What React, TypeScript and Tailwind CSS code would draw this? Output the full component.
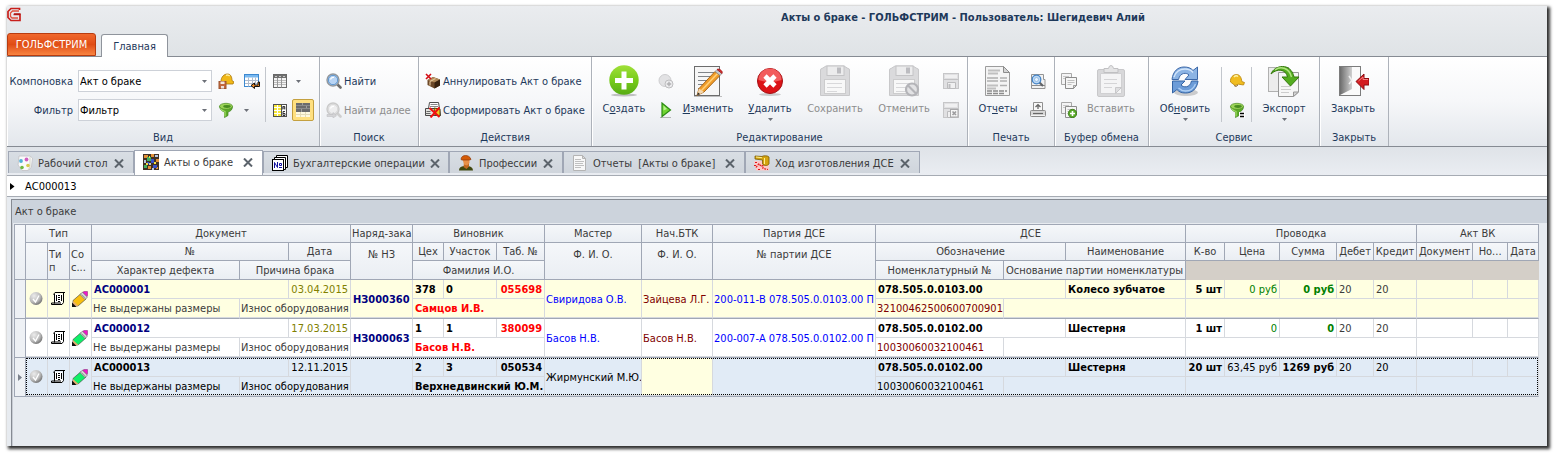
import React from "react";

type Kids = { children?: React.ReactNode };

/* ---------- small icons, 16x16 ---------- */

const S = ({ children, size = 16, cls = "" }: Kids & { size?: number; cls?: string }) => (
  <svg width={size} height={size} viewBox={`0 0 ${size} ${size}`} className={`shrink-0 ${cls}`} aria-hidden="true">
    {children}
  </svg>
);

const Logo = () => (
  <S>
    <path d="M12.500 4V2.500H4L1 5.500v6L4 14.500h9V8.500H6.500" fill="none" stroke="#c8201c" strokeWidth="1.700" />
    <path d="M12 5H5.500L3.500 7v3.500l1.500 1.500h6" fill="none" stroke="#e0503c" strokeWidth="1.300" />
    <path d="M7 8h6.500" fill="none" stroke="#a81410" strokeWidth="1.400" />
  </S>
);

const HelmetSave = () => (
  <S>
    <path d="M3 8.500C3 4 6 1 9.500 1 13 1 14 4.500 14 7.500l2 1.500-1 2H8L3 9.500z" fill="#f0b818" stroke="#a87408" strokeWidth=".8" />
    <path d="M8 2.500c1-.8 3-.6 3.600.6" stroke="#fff0a0" strokeWidth="1.300" fill="none" />
    <rect x="1" y="8.500" width="7" height="7" fill="#c4683c" stroke="#9c5430" />
    <rect x="2.500" y="8.500" width="4" height="2.500" fill="#f4e8e0" />
    <rect x="3" y="13" width="3" height="2.500" fill="#e8e0dc" />
  </S>
);

const Helmet = () => (
  <S>
    <path d="M1.500 9C1 4.500 4 1.500 7.500 1.500S12.500 5 12.800 8.500l2.700 1-1 2.500-5-.8L6 12.500z" fill="#f0bc20" stroke="#b88408" strokeWidth=".8" />
    <path d="M5 4c1.500-1.500 3-1.300 4-.5" stroke="#fff4a8" strokeWidth="1.500" fill="none" />
    <path d="M5 12.500l2 1 2-1.500" stroke="#907040" fill="none" />
  </S>
);

const GridReturn = () => (
  <S>
    <rect x="0.500" y="1.500" width="14" height="12" fill="#fff" stroke="#3c88d0" />
    <rect x="1" y="2" width="13" height="2.500" fill="#78b8f0" />
    <path d="M1 7.500h13M1 10.500h13M4.500 4.500v9M8.500 4.500v9M11.500 4.500v9" stroke="#b0bccc" />
    <path d="M14 9v3h-3.500v-2L7 12.500l3.500 3v-2h5V9z" fill="#f08c28" stroke="#000" strokeWidth=".9" />
  </S>
);

const GridPlain = () => (
  <S>
    <rect x="1.500" y="1.500" width="13" height="13" fill="#f4f4f4" stroke="#686868" />
    <rect x="2" y="2" width="12" height="3" fill="#707070" />
    <path d="M3 3.500h2M7 3.500h2M11 3.500h2" stroke="#c8c8c8" />
    <path d="M2 7.500h12M2 9.500h12M2 11.500h12" stroke="#bcbcbc" />
    <path d="M5.500 5v9.500M9.500 5v9.500" stroke="#989898" />
  </S>
);

const GridLetters = () => (
  <S>
    <rect x="1.500" y="2.500" width="13" height="12" fill="#fff" stroke="#505050" />
    <rect x="2" y="3" width="7" height="11" fill="#f8e838" />
    <path d="M2 5.500h7M2 8.500h7M2 11.500h7M5.500 3v11" stroke="#fff" />
    <path d="M9.500 2.500v12" stroke="#505050" />
    <path d="M10.800 7.500V4.500h2v3M11 6h2M13 9.500h-2v4h2v-2h-2" stroke="#222" strokeWidth=".9" fill="none" />
  </S>
);

const GridBands = () => (
  <S>
    <rect x="1" y="1" width="14" height="9" fill="#6c6c6c" />
    <path d="M1 3.500h14M1 6.500h14" stroke="#8c8c8c" />
    <path d="M7.500 1v2M11.500 4v2M6.500 7v3" stroke="#a0a0a0" />
    <rect x="1" y="10" width="14" height="5" fill="#fffae0" />
    <path d="M1 12.500h14" stroke="#e4dcb8" />
    <path d="M5.500 10v5M10.500 10v5" stroke="#e4dcb8" />
  </S>
);

const Funnel = ({ eq = false }: { eq?: boolean }) => (
  <S>
    <path d="M1.500 4.500C2 8 5 9.500 6.500 10v5.500l3.500-2V10c2.500-.5 4.500-2.500 4.500-5.500z" fill="#5cac28" stroke="#3c801c" strokeWidth=".7" />
    <path d="M2.500 6c1 2 2.500 3 4.500 3.500v5" fill="none" stroke="#a4dc68" strokeWidth="1.200" />
    <ellipse cx="8" cy="4.300" rx="6.500" ry="3" fill="#9cd458" stroke="#4c8c24" strokeWidth=".7" />
    <ellipse cx="9" cy="4.500" rx="3.800" ry="1.400" fill="#488c20" />
    {eq && <path d="M10 10h6v6h-6z" fill="#fff" />}
    {eq && <path d="M11 11.500h4M11 14.500h4" stroke="#000" strokeWidth="1.600" />}
  </S>
);

const Lens = ({ off = false }: { off?: boolean }) => (
  <S>
    <path d="M11 11l3.500 3.500" stroke={off ? "#cfcfcf" : "#6c6c6c"} strokeWidth="2.600" strokeLinecap="round" />
    <circle cx="7" cy="7" r="6" fill={off ? "#e4e4e6" : "#a8c8ec"} stroke={off ? "#cacaca" : "#94989c"} strokeWidth="1.400" />
    <circle cx="7" cy="7" r="4.700" fill={off ? "#eeeeef" : "#b8d4f4"} stroke={off ? "#d8d8d8" : "#5c94cc"} strokeWidth="1" />
    <path d="M4.500 6.500c.4-1.500 2-2.400 3.500-2" stroke="#fff" strokeWidth="1.200" fill="none" />
    {off && <path d="M1 12.500h6v-2l3.500 3.200L7 16v-1.500H1z" fill="#d4d4d6" stroke="#c0c0c2" strokeWidth=".6" />}
  </S>
);

const BoxCancel = () => (
  <S>
    <path d="M2.500 7L8 4l7 2.500v6L9.500 15.500 2.500 12z" fill="#6c4828" />
    <path d="M2.500 7L8 4l7 2.500-5.500 3z" fill="#b08858" />
    <path d="M9.500 9.500v6l5.500-3v-6z" fill="#38220f" />
    <path d="M5 8.500l5.500-3M5 8.500v4" stroke="#e0c498" strokeWidth="1.200" />
    <path d="M1 1l5 5M6 1L1 6" stroke="#d40c14" strokeWidth="1.600" />
  </S>
);

const FormReport = () => (
  <S>
    <path d="M4.500.500h9l1 6h-11z" fill="#fff" stroke="#505050" />
    <path d="M5.500 2.500h7M5 4.500h8" stroke="#888" />
    <path d="M.500 6.500h14l1 7H.500z" fill="#e4e4e0" stroke="#484848" />
    <path d="M.500 11.500h5M1.500 9.500h4" stroke="#686868" />
    <path d="M9 6l6 1v7l-5-1z" fill="#f0c820" stroke="#403000" strokeWidth=".8" />
    <path d="M4.500 6l10 9M14.500 5.500l-9 10" stroke="#f01010" strokeWidth="2" />
  </S>
);

const CloudAdd = () => (
  <S>
    <circle cx="7" cy="7.500" r="6" fill="#e2e2e4" stroke="#cdcdcf" />
    <circle cx="11" cy="11" r="4" fill="#ececee" stroke="#bebec0" />
    <path d="M11 8.800v4.400M8.800 11h4.400" stroke="#b0b0b2" strokeWidth="1.400" />
  </S>
);

const Play = () => (
  <S>
    <path d="M2 15.500h11" stroke="#8c8c8c" opacity=".6" />
    <path d="M4 1v13.500L12.500 8z" fill="#70d430" stroke="#2c8c14" strokeWidth="1.200" />
    <path d="M5.500 3.500v5L9 7z" fill="#b8f090" />
  </S>
);

const SmallDisk = ({ x = false }: { x?: boolean }) => (
  <S>
    <rect x="0.500" y="0.500" width="15" height="15" fill="#e0e0e2" stroke="#c6c6c8" />
    <path d="M1 6.500h14" stroke="#c2c2c4" />
    <rect x="2" y="2" width="12" height="3" fill="#f0f0f1" />
    <path d="M4.500 9.500h8v6h-8z" fill="#f0f0f1" stroke="#bcbcbe" />
    {!x && <rect x="5.500" y="11" width="2" height="4" fill="#bdbdc0" />}
    {x && <rect x="7.500" y="7.500" width="7.500" height="7.500" fill="#f6f6f6" stroke="#a8a8aa" />}
    {x && <path d="M9.500 9.500l3.500 3.500M13 9.500L9.500 13" stroke="#9c9c9e" strokeWidth="1.600" />}
  </S>
);

const PrintPreview = () => (
  <S>
    <path d="M1.500 1.500h12v5h1.500v9H1.500z" fill="#f2f2f2" stroke="#949494" />
    <path d="M2 12.500h13" stroke="#8c8c8c" />
    <path d="M9 9l4 4" stroke="#606468" strokeWidth="2.200" />
    <circle cx="6.500" cy="6.500" r="4.300" fill="#bcd8f4" stroke="#4484c8" strokeWidth="1.300" />
    <circle cx="6.500" cy="6.500" r="2" fill="#e8f4ff" stroke="#80acdc" strokeWidth=".7" />
  </S>
);

const Printer = () => (
  <S>
    <path d="M3.500.500h9v8h-9z" fill="#f8f8f8" stroke="#909090" />
    <path d="M8 7V3M5.500 5L8 2.700 10.500 5" stroke="#686868" strokeWidth="1.300" fill="none" />
    <rect x="0.500" y="8.500" width="15" height="6" rx="1" fill="#d8d8d8" stroke="#8c8c8c" />
    <path d="M3 11.500h10" stroke="#686868" strokeWidth="1.200" />
    <path d="M1 13.500h14" stroke="#f4f4f4" />
  </S>
);

const CopyDocs = ({ add = false }: { add?: boolean }) => (
  <S>
    <path d="M.500.500h10v11H.500z" fill="#f4f4f5" stroke="#a8a8a8" />
    <path d="M2 3.500h6M2 5.500h3" stroke="#c8c8c8" />
    <path d="M4.500 4.500h11v8l-3 3h-8z" fill="#f6f6f6" stroke="#8c8c8c" />
    <path d="M6.500 7.500h7M6.500 9.500h7M6.500 11.500h4" stroke="#c0c0c0" />
    {add ? (
      <>
        <circle cx="11.500" cy="11.500" r="4.200" fill="#58a828" stroke="#387818" strokeWidth=".8" />
        <path d="M11.500 9v5M9 11.500h5" stroke="#fff" strokeWidth="1.600" />
      </>
    ) : (
      <path d="M12.500 15.500v-3h3z" fill="#d8d8d8" stroke="#8c8c8c" strokeWidth=".8" />
    )}
  </S>
);

/* ---------- large icons, 32x32 ---------- */

const Create = () => (
  <S size={32}>
    <defs>
      <linearGradient id="create" x1="0" y1="0" x2="0" y2="1">
        <stop offset="0" stopColor="#a0e038" />
        <stop offset=".5" stopColor="#78cc1c" />
        <stop offset="1" stopColor="#58ac14" />
      </linearGradient>
    </defs>
    <ellipse cx="16" cy="30" rx="13" ry="1.500" fill="#888" opacity=".5" />
    <circle cx="16" cy="15" r="14.700" fill="url(#create)" />
    <path d="M16 6.500v18M7 15.500h18" stroke="#fff" strokeWidth="5" />
  </S>
);

const Edit = () => (
  <S size={32}>
    <path d="M2 31.500h28" stroke="#999" opacity=".6" />
    <rect x="2.500" y="1.500" width="25" height="29" fill="#f6f6f6" stroke="#6c6c6c" />
    <path d="M6 7.500h16M6 11.500h14M6 15.500h12M6 19.500h8M6 23.500h5" stroke="#808488" />
    <path d="M5 30.500l2-7L23 6.500l5 4L12 27z" fill="#f09c28" stroke="#a05c10" strokeWidth=".9" />
    <path d="M9.500 25.500L25.500 8.500" stroke="#ffd078" strokeWidth="1.600" />
    <path d="M23 6.500l2-2 5 4-2 2z" fill="#c4c8cc" stroke="#808080" strokeWidth=".6" />
    <path d="M25 4.500c1.500-1.500 6.500 1.500 5 4z" fill="#d83030" stroke="#a01818" strokeWidth=".8" />
    <path d="M5 30.500l2-7 5 3.500z" fill="#f4d8b0" />
    <path d="M5 30.500l1-3 2 1.500z" fill="#282828" />
  </S>
);

const Delete = () => (
  <S size={32}>
    <ellipse cx="16" cy="29.500" rx="11" ry="1.500" fill="#888" opacity=".4" />
    <circle cx="16" cy="16" r="12.500" fill="#dc1418" stroke="#a41014" />
    <path d="M4.500 15a11.500 11.500 0 0 1 23 0c-7 2.500-16 2.500-23 0z" fill="#f25c5c" />
    <path d="M11 11l10 10M21 11L11 21" stroke="#fff" strokeWidth="4.600" />
  </S>
);

const BigDisk = ({ no = false }: { no?: boolean }) => (
  <S size={32}>
    <path d="M3 3.500q-1.500 0-1.500 1.500v25.500h29V5q0-1.500-1.500-1.500l-4-2.500H7z" fill="#dadadc" stroke="#c8c8ca" />
    <rect x="8" y="1" width="17" height="9.500" fill="#ececed" stroke="#c4c4c6" />
    <rect x="18" y="2.500" width="4" height="6" fill="#bcbcc0" />
    <rect x="5.500" y="14.500" width="21" height="14" fill="#f8f8f8" stroke="#cccccd" />
    <path d="M8 18.500h15M8 22.500h15M8 26.500h10" stroke="#d8d8da" />
    {no && <circle cx="24" cy="24.500" r="6" fill="#e2e2e4" stroke="#b4b4b8" strokeWidth="2.200" />}
    {no && <path d="M20 20.500l8 8" stroke="#b4b4b8" strokeWidth="2.200" />}
  </S>
);

const Report = () => (
  <S size={32}>
    <path d="M3.500 1.500h18l6 6v23h-24z" fill="#f4f4f4" stroke="#9c9c9c" />
    <path d="M21.500 1.500v6h6z" fill="#d4d4d4" stroke="#8c8c8c" />
    <path d="M6 5.500h12M6 8.500h10M5 13h11M5 16h11M5 20.500h11M5 23.500h9" stroke="#c0c0c0" strokeWidth="1.800" />
    <path d="M18 13h7M18 16h7M18 20.500h7" stroke="#b0b0b0" strokeWidth="1.600" />
    <path d="M5 26h20M5 28.500h18" stroke="#8c8c8c" strokeWidth="1.500" strokeDasharray="5 1" />
  </S>
);

const Paste = () => (
  <S size={32}>
    <rect x="2.500" y="4.500" width="27" height="27" rx="1.500" fill="#d8d8da" stroke="#c8c8ca" />
    <path d="M5.500 8.500h21v20h-21z" fill="#f4f4f5" stroke="#d0d0d2" />
    <path d="M9 3.500h4.500q.500-3 2.500-3t2.500 3H23v4H9z" fill="#e4e4e5" stroke="#c0c0c2" />
    <path d="M9 14.500h13M9 18.500h13M9 22.500h8" stroke="#d4d4d6" />
    <path d="M20.500 28.500v-6h6z" fill="#dedee0" stroke="#c8c8ca" />
  </S>
);

const Refresh = () => (
  <S size={32}>
    <ellipse cx="17" cy="27.500" rx="12" ry="3.500" fill="#777" opacity=".35" />
    <path d="M3 14.500C4 6 9 2 15 2c4 0 7 1 9 3.500L28.500 2v12.500H16l4-4.500c-2-2.500-9-3-10.500 4.500z" fill="#8cb4e4" stroke="#3c68a8" />
    <path d="M29 16c-1 8-6 12-12.500 12-4 0-6.500-1-8.500-3.500L3.500 28V16H16l-4 4c2 2.500 9 3.500 10.500-4z" fill="#6c9cd8" stroke="#3464a4" />
    <path d="M5 12c1.500-5 6-8 11-8 3 0 6 1 8 3.500" stroke="#d4e6fa" strokeWidth="1.300" fill="none" />
    <path d="M26.500 19c-2 5-6 7-10 7-3 0-5-1-7-3" stroke="#b0d0f4" strokeWidth="1.300" fill="none" />
  </S>
);

const Export = () => (
  <S size={32}>
    <rect x="0.500" y="2.500" width="20" height="24" fill="#ececec" stroke="#b0b0b0" />
    <path d="M10.500 7.500h20V27l-5 4.500h-15z" fill="#f6f6f6" stroke="#989898" />
    <path d="M13 21.500h10M13 24.500h10M13 27.500h8" stroke="#ccc" />
    <path d="M25.500 31.500V27h5z" fill="#d4d4d4" stroke="#989898" />
    <path d="M3 9C6 0 23-3 26 12h5L22.500 21 14 12h5.500C18 4 9 3 3 9z" fill="#54ac20" stroke="#34780c" />
    <path d="M7 5c5-4 14-3 16.500 7" stroke="#b0e480" strokeWidth="1.400" fill="none" />
  </S>
);

const Exit = () => (
  <S size={32}>
    <defs>
      <linearGradient id="door">
        <stop offset="0" stopColor="#6c6c6c" />
        <stop offset="1" stopColor="#d0d0d0" />
      </linearGradient>
    </defs>
    <rect x="2.500" y="1.500" width="21" height="29" fill="#fafafa" stroke="#7c7c7c" />
    <path d="M3 2h12v22L3 30z" fill="url(#door)" />
    <path d="M12 11l3 4.500L12 19" stroke="#eee" strokeWidth="1.500" fill="none" />
    <path d="M19 16.500L27 9v4.500h5v6.500h-5V24.500z" fill="#d41c20" stroke="#8c0c10" />
    <path d="M21.500 16l4.500-4v2.500h5" stroke="#f48080" fill="none" />
  </S>
);

/* ---------- document tab icons ---------- */

const Palette = () => (
  <S>
    <path d="M2 1h11l2.500 2-1 9-3 3.500H5L1 10z" fill="#fafafa" stroke="#c8c8cc" />
    <path d="M13 2v10l-2 3" stroke="#d4d4c8" fill="none" />
    <circle cx="4" cy="6" r="1.900" fill="#50b0d8" />
    <circle cx="9.500" cy="4.500" r="1.900" fill="#d060c0" />
    <circle cx="5" cy="12.500" r="1.800" fill="#70b840" />
    <circle cx="11" cy="10.500" r="1.800" fill="#d8cc50" />
  </S>
);

const Mosaic = () => (
  <S>
    <rect width="16" height="16" fill="#403024" />
    <path d="M1 1h4v3H1zM8 0h3v3H8zM13 5h3v3h-3zM5 12h3v3H5zM13 13h2v2h-2z" fill="#e09038" />
    <path d="M4 3h4v4H4zM1 11h3v3H1z" fill="#40b060" />
    <path d="M8 5h3v4H8zM10 11h4v3h-4zM4 8h2v2H4z" fill="#3850c8" />
    <path d="M12 1h3v2h-3zM1 6h2v3H1zM6 9h2v2H6zM9 14h2v2H9z" fill="#b8c8e0" />
    <path d="M11 8h2v2h-2zM3 9h2v2H3zM6 2h1v2H6z" fill="#f4e040" />
  </S>
);

const Ledger = () => (
  <S>
    <path d="M4.500 3V.500h11v12H13M2.500 5V2.500h11v12H11.500" fill="#fff" stroke="#000" />
    <rect x="0.500" y="4.500" width="11" height="11" fill="#fff" stroke="#000" />
    <path d="M2.500 13V7.500l3 5V7M9.500 8.500h-2v2h2zM7 12.500h3" stroke="#1010a0" fill="none" />
  </S>
);

const Worker = () => (
  <S>
    <path d="M1 15.500c0-3 2-4 5-4.500h4c3 .5 5 2 5 4.500z" fill="#404810" />
    <path d="M6 8h5v3.500l-2.500 2.500L5.500 12z" fill="#c06820" />
    <path d="M4.500 4h7v4L9 10.500 6 9.500z" fill="#e89048" />
    <path d="M3 4.500C3 2 5 .500 7.500.500S12 1.500 13 4.500L11 5H4z" fill="#d45c08" stroke="#903808" strokeWidth=".7" />
  </S>
);

const Sheet = () => (
  <S>
    <path d="M1.500.500h9l3 3v12h-12z" fill="#f8f8f8" stroke="#b4b4b4" />
    <path d="M10.500.500v3h3z" fill="#dcdcdc" stroke="#b4b4b4" />
    <path d="M3 4.500h6M3 6.500h9M3 8.500h8M3 10.500h9M3 12.500h6" stroke="#c0c0c0" />
  </S>
);

const Progress = () => (
  <S>
    <path d="M0 6h9l6 4v5.500H2z" fill="#fcc8c8" />
    <path d="M1 7.500h3M2 12.500l3-4 2 3 2-1v3l5 1M0 10.500h2M4 14.500h3" stroke="#e01818" strokeWidth="1.200" fill="none" strokeDasharray="2 1" />
    <path d="M1 1l7 .5c1-1 6-1 7 .5v7c-1.500 2-5 2-6.500 0V5L1 4z" fill="#d4a410" stroke="#7c5c04" strokeWidth=".8" />
    <path d="M2 2l6 .7M10.500 3v6" stroke="#fff090" />
  </S>
);

/* ---------- row icons ---------- */

const Ball = () => (
  <S>
    <defs>
      <radialGradient id="ball" cx=".35" cy=".3" r=".8">
        <stop offset="0" stopColor="#ececec" />
        <stop offset=".6" stopColor="#b8b8b8" />
        <stop offset="1" stopColor="#606060" />
      </radialGradient>
    </defs>
    <circle cx="8" cy="7.500" r="6.500" fill="url(#ball)" />
    <path d="M5 8l2.500 3L11 4.500" stroke="#fff" strokeWidth="1.300" fill="none" />
  </S>
);

const Scroll = () => (
  <S>
    <path d="M4.500 3v10.500h8V3z" fill="#fff" stroke="none" />
    <path d="M3.500 3.500L5 1.500h10M4.500 3v9.500M13.500 2v9.500l-1.500 2H1.500v-1.500h9.500" stroke="#000" fill="none" />
    <path d="M6.500 4v6M8 4.500h2M8 6.500h2M8 8.500h2M8 10.500h2M11.500 4v6" stroke="#000" />
  </S>
);

const Pencil = ({ color }: { color: string }) => (
  <S>
    <path d="M1 15v-5.500L8.500 3l5.500 5-8 7z" fill={color} stroke="#404040" strokeWidth=".6" />
    <path d="M10.500 1.500L12 .500h3.500V4.500l-1.500 2z" fill="#f018c8" stroke="#802070" strokeWidth=".5" />
    <path d="M8 3.500l2.500-2.300 5 5L13 8.500z" fill="#d8d8d8" stroke="#606060" strokeWidth=".6" />
    <path d="M9.500 3.500l4 3.800" stroke="#808080" strokeWidth=".7" />
    <path d="M1 15.500v-5.500l5.500 5z" fill="#e8b070" />
    <path d="M0 16v-4.500L4.500 16z" fill="#101010" />
  </S>
);

const Down = ({ cls = "" }: { cls?: string }) => (
  <svg width="5" height="3" viewBox="0 0 5 3" className={`shrink-0 ${cls}`} aria-hidden="true">
    <path d="M0 0h5L2.500 3z" fill="#6c7078" />
  </svg>
);

/* ---------- ribbon parts ---------- */

const Group = ({ title, width, children }: Kids & { title: string; width: string }) => (
  <section
    aria-label={title}
    className={`flex shrink-0 flex-col border-r border-[#adb2ba] shadow-[inset_1px_0_0_#ffffff] ${width}`}
  >
    <div className="flex h-[73px] pt-2">{children}</div>
    <h2 className="text-center leading-4 text-[#1e395b]">{title}</h2>
  </section>
);

const Big = ({
  label,
  hot,
  icon,
  width,
  menu,
  off,
}: {
  label: string;
  hot?: number;
  icon: React.ReactNode;
  width: string;
  menu?: boolean;
  off?: boolean;
}) => (
  <button
    type="button"
    disabled={off}
    className={`flex shrink-0 flex-col items-center whitespace-nowrap ${width} ${off ? "text-[#8d8d8d]" : "text-[#1e395b]"}`}
  >
    {icon}
    <span className="mt-1 leading-4">
      {hot === undefined ? (
        label
      ) : (
        <>
          {label.slice(0, hot)}
          <span className="underline">{label[hot]}</span>
          {label.slice(hot + 1)}
        </>
      )}
    </span>
    {menu && <Down cls="mt-px" />}
  </button>
);

const Pair = ({ items, width }: { items: [string, React.ReactNode][]; width: string }) => (
  <div className={`flex shrink-0 flex-col items-center gap-[13px] pt-2 ${width}`}>
    {items.map(([name, icon]) => (
      <button key={name} type="button" aria-label={name}>
        {icon}
      </button>
    ))}
  </div>
);

const Line = () => <div className="mt-[2px] h-[55px] w-px shrink-0 bg-[#c2c6cc]" />;

const Combo = ({ id, value }: { id: string; value: string }) => (
  <div className="relative">
    <select
      id={id}
      className="h-[22px] w-[134px] appearance-none border border-[#cdd1d8] bg-white pl-px text-black outline-none"
    >
      <option>{value}</option>
    </select>
    <Down cls="pointer-events-none absolute top-[10px] right-[5px]" />
  </div>
);

const TextButton = ({ icon, label, off }: { icon: React.ReactNode; label: string; off?: boolean }) => (
  <button
    type="button"
    disabled={off}
    className={`flex h-4 items-center gap-[2px] whitespace-nowrap ${off ? "text-[#8d8d8d]" : "text-[#1e395b]"}`}
  >
    {icon}
    {label}
  </button>
);

/* ---------- document tabs ---------- */

const tabs = [
  { name: "Рабочий стол", icon: <Palette />, width: "w-[126px]" },
  { name: "Акты о браке", icon: <Mosaic />, width: "w-[129px]", active: true },
  { name: "Бухгалтерские операции", icon: <Ledger />, width: "w-[186px]" },
  { name: "Профессии", icon: <Worker />, width: "w-[114px]" },
  { name: "Отчеты  [Акты о браке]", icon: <Sheet />, width: "w-[182px]" },
  { name: "Ход изготовления ДСЕ", icon: <Progress />, width: "w-[175px]" },
];

/* ---------- grid ---------- */

const cols = [11, 22, 22, 22, 148, 49, 62, 62, 31, 53, 48, 97, 71, 163, 128, 62, 120, 39, 55, 57, 37, 43, 56, 35, 31];

const Th = ({
  children,
  span = 1,
  rows = 1,
  top,
  left,
}: Kids & { span?: number; rows?: number; top?: boolean; left?: boolean }) => (
  <th
    colSpan={span}
    rowSpan={rows}
    className={`overflow-hidden border-r border-b border-[#a0a7b5] bg-linear-to-b from-[#f5f7fa] to-[#eaeef3] px-px font-normal whitespace-nowrap text-[#3b3b3b] ${top ? "pt-[5px] align-top" : "align-middle"} ${left ? "text-left" : "text-center"}`}
  >
    {children}
  </th>
);

type Rec = {
  doc: string;
  date: string;
  order: string;
  shop: string;
  area: string;
  tab: string;
  guilty: string;
  master: string;
  chief: string;
  batch: string;
  code: string;
  item: string;
  nomen: string;
  qty: string;
  price: string;
  sum: string;
  pencil: string;
  selected?: boolean;
};

const records: Rec[] = [
  {
    doc: "АС000001", date: "03.04.2015", order: "НЗ000360", shop: "378", area: "0", tab: "055698",
    guilty: "Самцов И.В.", master: "Свиридова О.В.", chief: "Зайцева Л.Г.", batch: "200-011-В 078.505.0.0103.00 П",
    code: "078.505.0.0103.00", item: "Колесо зубчатое", nomen: "32100462500600700901",
    qty: "5 шт", price: "0 руб", sum: "0 руб", pencil: "#f8c010",
  },
  {
    doc: "АС000012", date: "17.03.2015", order: "НЗ000063", shop: "1", area: "1", tab: "380099",
    guilty: "Басов Н.В.", master: "Басов Н.В.", chief: "Басов Н.В.", batch: "200-007-А 078.505.0.0102.00 П",
    code: "078.505.0.0102.00", item: "Шестерня", nomen: "10030060032100461",
    qty: "1 шт", price: "0", sum: "0", pencil: "#10f068",
  },
  {
    doc: "АС000013", date: "12.11.2015", order: "", shop: "2", area: "3", tab: "050534",
    guilty: "Верхнедвинский Ю.М.", master: "Жирмунский М.Ю.", chief: "", batch: "",
    code: "078.505.0.0102.00", item: "Шестерня", nomen: "10030060032100461",
    qty: "20 шт", price: "63,45 руб", sum: "1269 руб", pencil: "#10f068", selected: true,
  },
];

const Td = ({
  children,
  span = 1,
  tall,
  last,
  wide,
  cls = "",
}: Kids & { span?: number; tall?: boolean; last?: boolean; wide?: boolean; cls?: string }) => (
  <td
    colSpan={span}
    rowSpan={tall ? 2 : 1}
    className={`overflow-hidden border-r border-b border-r-[#d6d9de] align-middle whitespace-nowrap ${
      wide ? "px-[2px]" : "px-px"
    } ${tall || last ? "border-b-[#a0a7b5] shadow-[inset_0_-1px_0_#d6d9de]" : "border-b-[#d6d9de]"} ${cls}`}
  >
    {children}
  </td>
);

const Row = ({ r, stripe }: { r: Rec; stripe: boolean }) => {
  const sel = r.selected;
  const pick = (color: string) => (sel ? "text-black" : color);
  return (
    <tbody
      className={`relative ${sel ? "bg-[#e1ebf6] text-black after:pointer-events-none after:absolute after:top-0 after:right-px after:bottom-[2px] after:left-[11px] after:border after:border-dotted after:border-black" : stripe ? "bg-[#ffffe1] text-[#3b3b3b]" : "bg-white text-[#3b3b3b]"}`}
    >
      <tr className="h-[19px]">
        <td rowSpan={2} className="border-r border-b border-[#a0a7b5] bg-[#eef1f5] p-0">
          {sel && (
            <svg width="4" height="7" viewBox="0 0 4 7" className="mx-auto" aria-hidden="true">
              <path d="M0 0v7l4-3.500z" fill="#7c828c" />
            </svg>
          )}
        </td>
        <Td tall wide><Ball /></Td>
        <Td tall wide><Scroll /></Td>
        <Td tall wide><Pencil color={r.pencil} /></Td>
        <Td span={2} wide cls={`font-bold ${pick("text-[#000080]")}`}>{r.doc}</Td>
        <Td wide cls={`text-right ${pick("text-[#808000]")}`}>{r.date}</Td>
        <Td tall wide cls={`font-bold ${pick("text-[#000080]")}`}>{r.order}</Td>
        <Td wide cls="font-bold text-black">{r.shop}</Td>
        <Td wide cls="font-bold text-black">{r.area}</Td>
        <Td wide cls={`text-right font-bold ${pick("text-[#ff0000]")}`}>{r.tab}</Td>
        <Td tall cls={pick("text-[#0000ff]")}>{r.master}</Td>
        <Td tall cls={sel ? "bg-[#ffffe1]" : "text-[#800000]"}>{r.chief}</Td>
        <Td tall cls={pick("text-[#0000ff]")}>{r.batch}</Td>
        <Td span={2} wide cls="font-bold text-black">{r.code}</Td>
        <Td wide cls="font-bold text-black">{r.item}</Td>
        <Td wide cls="text-right font-bold text-black">{r.qty}</Td>
        <Td wide cls={`text-right ${pick("text-[#008000]")}`}>{r.price}</Td>
        <Td wide cls={`text-right font-bold ${pick("text-[#008000]")}`}>{r.sum}</Td>
        <Td wide>20</Td>
        <Td wide>20</Td>
        <Td />
        <Td />
        <Td />
      </tr>
      <tr className="h-5">
        <Td last>Не выдержаны размеры</Td>
        <Td last span={2}>Износ оборудования</Td>
        <Td last wide span={3} cls={`font-bold ${pick("text-[#ff0000]")}`}>{r.guilty}</Td>
        <Td last cls={pick("text-[#800000]")}>{r.nomen}</Td>
        <Td last span={2} />
        <Td last span={5} />
        <Td last span={3} />
      </tr>
    </tbody>
  );
};

export default function App() {
  return (
    <div className="flex h-screen flex-col bg-white pt-[6px] pr-[7px] pb-[7px] pl-[7px] text-[11px] leading-[13px] [font-family:'DejaVu_Sans_Condensed','DejaVu_Sans',sans-serif]">
      <div className="flex min-h-0 flex-1 flex-col overflow-hidden bg-[#e7ebf0] shadow-[2px_2px_3px_1px_#303030]">
        {/* title and ribbon tabs */}
        <header className="bg-linear-to-b from-[#eaecef] to-[#dfe3e6]">
          <div className="flex h-[27px] items-start">
            <Logo />
            <h1 className="flex-1 pt-1 pl-[356px] text-center leading-4 font-bold text-[#1e395b]">
              Акты о браке - ГОЛЬФСТРИМ - Пользователь: Шегидевич Алий
            </h1>
          </div>
          <nav className="flex h-6 items-end gap-[5px] border-b border-[#868b93]">
            <button
              type="button"
              className="h-[23px] w-[89px] rounded-t-[3px] border border-[#b83c10] bg-linear-to-b from-[#f0682c] via-[#e04c14] to-[#f88440] text-white"
            >
              ГОЛЬФСТРИМ
            </button>
            <button
              type="button"
              className="-mb-px h-[23px] w-[67px] rounded-t-[3px] border border-b-0 border-[#8f949c] bg-white pt-px text-[#1e395b]"
            >
              Главная
            </button>
          </nav>
        </header>

        {/* ribbon */}
        <div className="flex h-[90px] shrink-0 border-b border-[#868b93] bg-linear-to-b from-white via-[#f6f7f9] to-[#e3e7ec]">
          <Group title="Вид" width="w-[313px]">
            <div className="mt-[5px] grid h-[52px] grid-cols-[66px_134px] content-start gap-x-[5px] gap-y-[7px] text-[#1e395b]">
              <label htmlFor="layout" className="self-center text-right">Компоновка</label>
              <Combo id="layout" value="Акт о браке" />
              <label htmlFor="filter" className="self-center text-right">Фильтр</label>
              <Combo id="filter" value="Фильтр" />
            </div>
            <div className="grid w-[53px] grid-cols-[16px_16px] content-start gap-x-[10px] gap-y-[13px] pt-2 pl-[6px]">
              <button type="button" aria-label="Сохранить компоновку"><HelmetSave /></button>
              <button type="button" aria-label="Вернуть компоновку"><GridReturn /></button>
              <button type="button" aria-label="Фильтр"><Funnel /></button>
              <button type="button" aria-label="Меню фильтра"><Down /></button>
            </div>
            <Line />
            <div className="grid w-[48px] grid-cols-[16px_22px] content-start items-center gap-x-[4px] gap-y-[7px] pt-[5px] pl-[6px]">
              <button type="button" aria-label="Вид таблицы"><GridPlain /></button>
              <button type="button" aria-label="Меню вида" className="flex h-[22px] items-center pl-1"><Down /></button>
              <button type="button" aria-label="Заголовки"><GridLetters /></button>
              <button
                type="button"
                aria-label="Полосы"
                className="flex size-[22px] items-center justify-center rounded-[2px] border border-[#c4a040] bg-[#ffe080]"
              >
                <GridBands />
              </button>
            </div>
          </Group>
          <Group title="Поиск" width="w-[99px]">
            <div className="flex flex-col gap-[13px] pt-2 pl-[6px]">
              <TextButton icon={<Lens />} label="Найти" />
              <TextButton icon={<Lens off />} label="Найти далее" off />
            </div>
          </Group>
          <Group title="Действия" width="w-[173px]">
            <div className="flex flex-col gap-[13px] pt-2 pl-[6px]">
              <TextButton icon={<BoxCancel />} label="Аннулировать Акт о браке" />
              <TextButton icon={<FormReport />} label="Сформировать Акт о браке" />
            </div>
          </Group>
          <Group title="Редактирование" width="w-[376px]">
            <Big label="Создать" hot={1} icon={<Create />} width="w-[64px]" />
            <Pair width="w-[20px]" items={[["Копия", <CloudAdd />], ["Запуск", <Play />]]} />
            <Big label="Изменить" hot={0} icon={<Edit />} width="w-[64px]" />
            <Big label="Удалить" hot={0} icon={<Delete />} width="w-[60px]" menu />
            <Big label="Сохранить" icon={<BigDisk />} width="w-[70px]" off />
            <Big label="Отменить" icon={<BigDisk no />} width="w-[68px]" off />
            <Pair width="w-[26px]" items={[["Сохранить строку", <SmallDisk />], ["Отменить строку", <SmallDisk x />]]} />
          </Group>
          <Group title="Печать" width="w-[87px]">
            <Big label="Отчеты" hot={2} icon={<Report />} width="w-[60px]" />
            <Pair width="w-[20px]" items={[["Просмотр", <PrintPreview />], ["Печать", <Printer />]]} />
          </Group>
          <Group title="Буфер обмена" width="w-[94px]">
            <Pair width="w-[28px]" items={[["Копировать", <CopyDocs />], ["Добавить в буфер", <CopyDocs add />]]} />
            <Big label="Вставить" icon={<Paste />} width="w-[56px]" off />
          </Group>
          <Group title="Сервис" width="w-[171px]">
            <Big label="Обновить" hot={2} icon={<Refresh />} width="w-[72px]" menu />
            <Line />
            <Pair width="w-[29px]" items={[["Каска", <Helmet />], ["Фильтр равно", <Funnel eq />]]} />
            <Line />
            <Big label="Экспорт" icon={<Export />} width="w-[64px]" menu />
          </Group>
          <Group title="Закрыть" width="w-[69px]">
            <Big label="Закрыть" icon={<Exit />} width="w-[66px]" />
          </Group>
        </div>

        {/* document tabs */}
        <div className="flex shrink-0 items-end border-b border-[#a6abb3] bg-linear-to-b from-[#dfe3e8] to-[#eaedf2] pt-[3px] pl-px">
          {tabs.map((t) => (
            <div
              key={t.name}
              className={`flex items-center gap-[5px] border border-b-0 border-[#a0a7b5] pr-[9px] pl-2 whitespace-pre text-[#3b3b3b] ${t.width} ${
                t.active ? "h-[25px] bg-white pb-[2px]" : "mb-[2px] h-[22px] bg-linear-to-b from-[#d9dee4] to-[#cfd5dc] pt-px"
              }`}
            >
              {t.icon}
              <button type="button" className="flex-1 text-left whitespace-pre">{t.name}</button>
              <button type="button" aria-label={`Закрыть ${t.name}`} className="shrink-0">
                <svg width="10" height="9" viewBox="0 0 10 9" aria-hidden="true">
                  <path d="M1 .500l8 8M9 .500l-8 8" stroke="#5c646c" strokeWidth="2" />
                </svg>
              </button>
            </div>
          ))}
        </div>

        {/* current record */}
        <div className="flex h-[21px] shrink-0 items-center border-b border-[#a6abb3] bg-white pl-[3px] text-black">
          <svg width="5" height="7" viewBox="0 0 5 7" aria-hidden="true">
            <path d="M0 0v7l4.500-3.500z" fill="#000" />
          </svg>
          <span className="pl-[10px]">АС000013</span>
        </div>

        {/* grid panel */}
        <main className="mt-[2px] ml-1 flex min-h-0 flex-1 flex-col border-t border-l border-[#868b93] shadow-[inset_1px_0_0_#c8ccd4]">
          <h2 className="h-[23px] shrink-0 bg-[#ccd3dc] pt-[5px] pl-[3px] text-[#3b3b3b]">Акт о браке</h2>
          <div className="mr-2 ml-[2px] pt-px">
            <table className="w-full table-fixed border-separate border-spacing-0 border-t border-l border-[#a0a7b5] [&_td]:py-0 [&_th]:pb-0">
              <colgroup>
                {cols.map((w, i) => (
                  <col key={i} style={{ width: w }} />
                ))}
              </colgroup>
              <thead>
                <tr className="h-[18px]">
                  <Th rows={3} />
                  <Th span={3}>Тип</Th>
                  <Th span={3}>Документ</Th>
                  <Th>Наряд-зака</Th>
                  <Th span={3}>Виновник</Th>
                  <Th>Мастер</Th>
                  <Th>Нач.БТК</Th>
                  <Th>Партия ДСЕ</Th>
                  <Th span={3}>ДСЕ</Th>
                  <Th span={5}>Проводка</Th>
                  <Th span={3}>Акт ВК</Th>
                </tr>
                <tr className="h-[18px]">
                  <Th rows={2} />
                  <Th rows={2} top left>Ти<br />п</Th>
                  <Th rows={2} top left>Со<br />с...</Th>
                  <Th span={2}>№</Th>
                  <Th>Дата</Th>
                  <Th rows={2} top>№ НЗ</Th>
                  <Th>Цех</Th>
                  <Th>Участок</Th>
                  <Th>Таб. №</Th>
                  <Th rows={2} top>Ф. И. О.</Th>
                  <Th rows={2} top>Ф. И. О.</Th>
                  <Th rows={2} top>№ партии ДСЕ</Th>
                  <Th span={2}>Обозначение</Th>
                  <Th>Наименование</Th>
                  <Th>К-во</Th>
                  <Th>Цена</Th>
                  <Th>Сумма</Th>
                  <Th>Дебет</Th>
                  <Th>Кредит</Th>
                  <Th>Документ</Th>
                  <Th>Но...</Th>
                  <Th>Дата</Th>
                </tr>
                <tr className="h-[19px]">
                  <Th>Характер дефекта</Th>
                  <Th span={2}>Причина брака</Th>
                  <Th span={3}>Фамилия И.О.</Th>
                  <Th>Номенклатурный №</Th>
                  <Th span={2}>Основание партии номенклатуры</Th>
                  <td colSpan={8} className="bg-[#d4cfc8]" />
                </tr>
              </thead>
              {records.map((r, i) => (
                <Row key={r.doc} r={r} stripe={i % 2 === 0} />
              ))}
            </table>
          </div>
        </main>
      </div>
    </div>
  );
}
